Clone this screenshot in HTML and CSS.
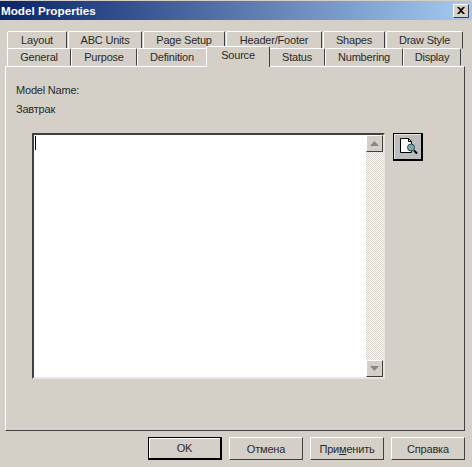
FILE: index.html
```html
<!DOCTYPE html>
<html>
<head>
	<meta charset="UTF-8">
	<title>Model Properties</title>
	<link rel="stylesheet" href="styles.css">
</head>
<body>

	<div class="titlebar">
		<span class="title">Model Properties</span>
		<button class="close">
			<svg width="8" height="7" viewBox="0 0 8 7"><path d="M0 0h2l2 2 2-2h2L5 3.500 8 7H6L4 5 2 7H0l3-3.500z" fill="#000"/></svg>
		</button>
	</div>

	<div class="tabs">
		<div class="tabrow back">
			<div class="tab w60">Layout</div>
			<div class="tab w74">ABC Units</div>
			<div class="tab w82">Page Setup</div>
			<div class="tab w96">Header/Footer</div>
			<div class="tab w62">Shapes</div>
			<div class="tab w77">Draw Style</div>
		</div>
		<div class="tabrow front">
			<div class="tab w64">General</div>
			<div class="tab w66">Purpose</div>
			<div class="tab w70">Definition</div>
			<div class="tab w64 selected">Source</div>
			<div class="tab w56">Status</div>
			<div class="tab w78">Numbering</div>
			<div class="tab w58">Display</div>
		</div>
	</div>

	<div class="panel">
		<p class="label">Model Name:</p>
		<p class="label name">Завтрак</p>
		<div class="source">
			<div class="editor">
				<div class="text"><span class="caret"></span></div>
				<div class="scrollbar">
					<div class="arrow"><svg width="9" height="5" viewBox="0 0 9 5"><path d="M4.500 0L9 5H0z" fill="#8a8780"/></svg></div>
					<div class="arrow"><svg width="9" height="5" viewBox="0 0 9 5"><path d="M0 0h9L4.500 5z" fill="#8a8780"/></svg></div>
				</div>
			</div>
			<button class="preview">
				<svg width="22" height="20" viewBox="0 0 22 20">
					<path d="M3.500 1.500h8l3 3v11h-11z" fill="#fff" stroke="#000"/>
					<path d="M11.500 1.500v3h3" fill="none" stroke="#000"/>
					<path d="M17 13.500l3 3" stroke="#000" stroke-width="2"/>
					<circle cx="14" cy="10.500" r="3.500" fill="#7fa6a8" stroke="#2c4a4c"/>
				</svg>
			</button>
		</div>
	</div>

	<div class="footer">
		<button class="btn default">OK</button>
		<button class="btn">Отмена</button>
		<button class="btn">При<u>м</u>енить</button>
		<button class="btn">Справка</button>
	</div>

</body>
</html>
```

FILE: styles.css
```css
* { margin: 0; padding: 0; box-sizing: border-box; }

html, body {
	width: 472px;
	height: 467px;
	overflow: hidden;
	background: #d4d0c8;
	font-size: 11px;
	letter-spacing: -.2px;
	font-family: "Liberation Sans", Arial, sans-serif;
	color: #2a2a2a;
}

.titlebar {
	display: flex;
	align-items: center;
	justify-content: space-between;
	height: 19px;
	margin-top: 1px;
	padding: 0 3px 0 1px;
	background: linear-gradient(to right, #0a246a, #a6caf0);
	color: #fff;
}
.title {
	font-weight: bold;
	font-size: 11.700px;
	letter-spacing: 0;
}
.close {
	display: flex;
	align-items: center;
	justify-content: center;
	width: 16px;
	height: 14px;
	background: #d4d0c8;
	border: 1px solid;
	border-color: #fff #404040 #404040 #fff;
}

.tabs {
	height: 35px;
	margin: 11px 0 0 7px;
}
.tabrow {
	display: flex;
	height: 17px;
}
.tabrow.back {
	gap: 1px;
}
.tab {
	height: 18px;
	text-align: center;
	line-height: 16px;
	background: #d4d0c8;
	border: 1px solid;
	border-color: #fff #404040 transparent #fff;
	border-radius: 2px 2px 0 0;
}
.selected {
	position: relative;
	z-index: 1;
	height: 21px;
	margin: -2px -1px 0;
	line-height: 17px;
	border-bottom: 0;
}
.w56 { width: 56px; }
.w58 { width: 58px; }
.w60 { width: 60px; }
.w62 { width: 62px; }
.w64 { width: 64px; }
.w66 { width: 66px; }
.w70 { width: 70px; }
.w74 { width: 74px; }
.w77 { width: 77px; }
.w78 { width: 78px; }
.w82 { width: 82px; }
.w96 { width: 96px; }

.panel {
	width: 460px;
	height: 365px;
	margin: 0 0 0 5px;
	padding: 14px 0 0 10px;
	border: 1px solid;
	border-color: #fff #404040 #404040 #fff;
}
.label {
	height: 19px;
	line-height: 19px;
}

.source {
	display: flex;
	align-items: flex-start;
	gap: 8px;
	margin: 14px 0 0 16px;
}
.editor {
	display: flex;
	width: 353px;
	height: 246px;
	background: #fff;
	border: 2px solid;
	border-color: #404040 #e8e6e0 #e8e6e0 #404040;
	box-shadow: inset -1px 0 0 #d4d0c8;
}
.text {
	flex: 1;
	padding: 1px 0 0 1px;
}
.caret {
	display: block;
	width: 1px;
	height: 14px;
	background: #000;
}
.scrollbar {
	display: flex;
	flex-direction: column;
	justify-content: space-between;
	width: 17px;
	background: conic-gradient(#d4d0c8 25%, #fff 0 50%, #d4d0c8 0 75%, #fff 0) 0 0 / 2px 2px;
}
.arrow {
	display: flex;
	align-items: center;
	justify-content: center;
	height: 17px;
	background: #d4d0c8;
	border: 1px solid;
	border-color: #fff #404040 #404040 #fff;
}
.preview {
	display: flex;
	align-items: center;
	justify-content: center;
	width: 30px;
	height: 28px;
	background: #bdbdbd;
	border: solid #000;
	border-width: 1px 2px 2px 1px;
	box-shadow: inset 1px 1px 0 #e8e6e0;
}

.footer {
	display: flex;
	gap: 7px;
	margin: 6px 0 0 148px;
}
.btn {
	width: 74px;
	height: 23px;
	font: inherit;
	letter-spacing: inherit;
	color: inherit;
	background: #d4d0c8;
	border: 1px solid;
	border-color: #fff #404040 #404040 #fff;
}
.default {
	border: solid #000;
	border-width: 1px 2px 2px 1px;
	box-shadow: inset 1px 1px 0 #fff;
}
```
